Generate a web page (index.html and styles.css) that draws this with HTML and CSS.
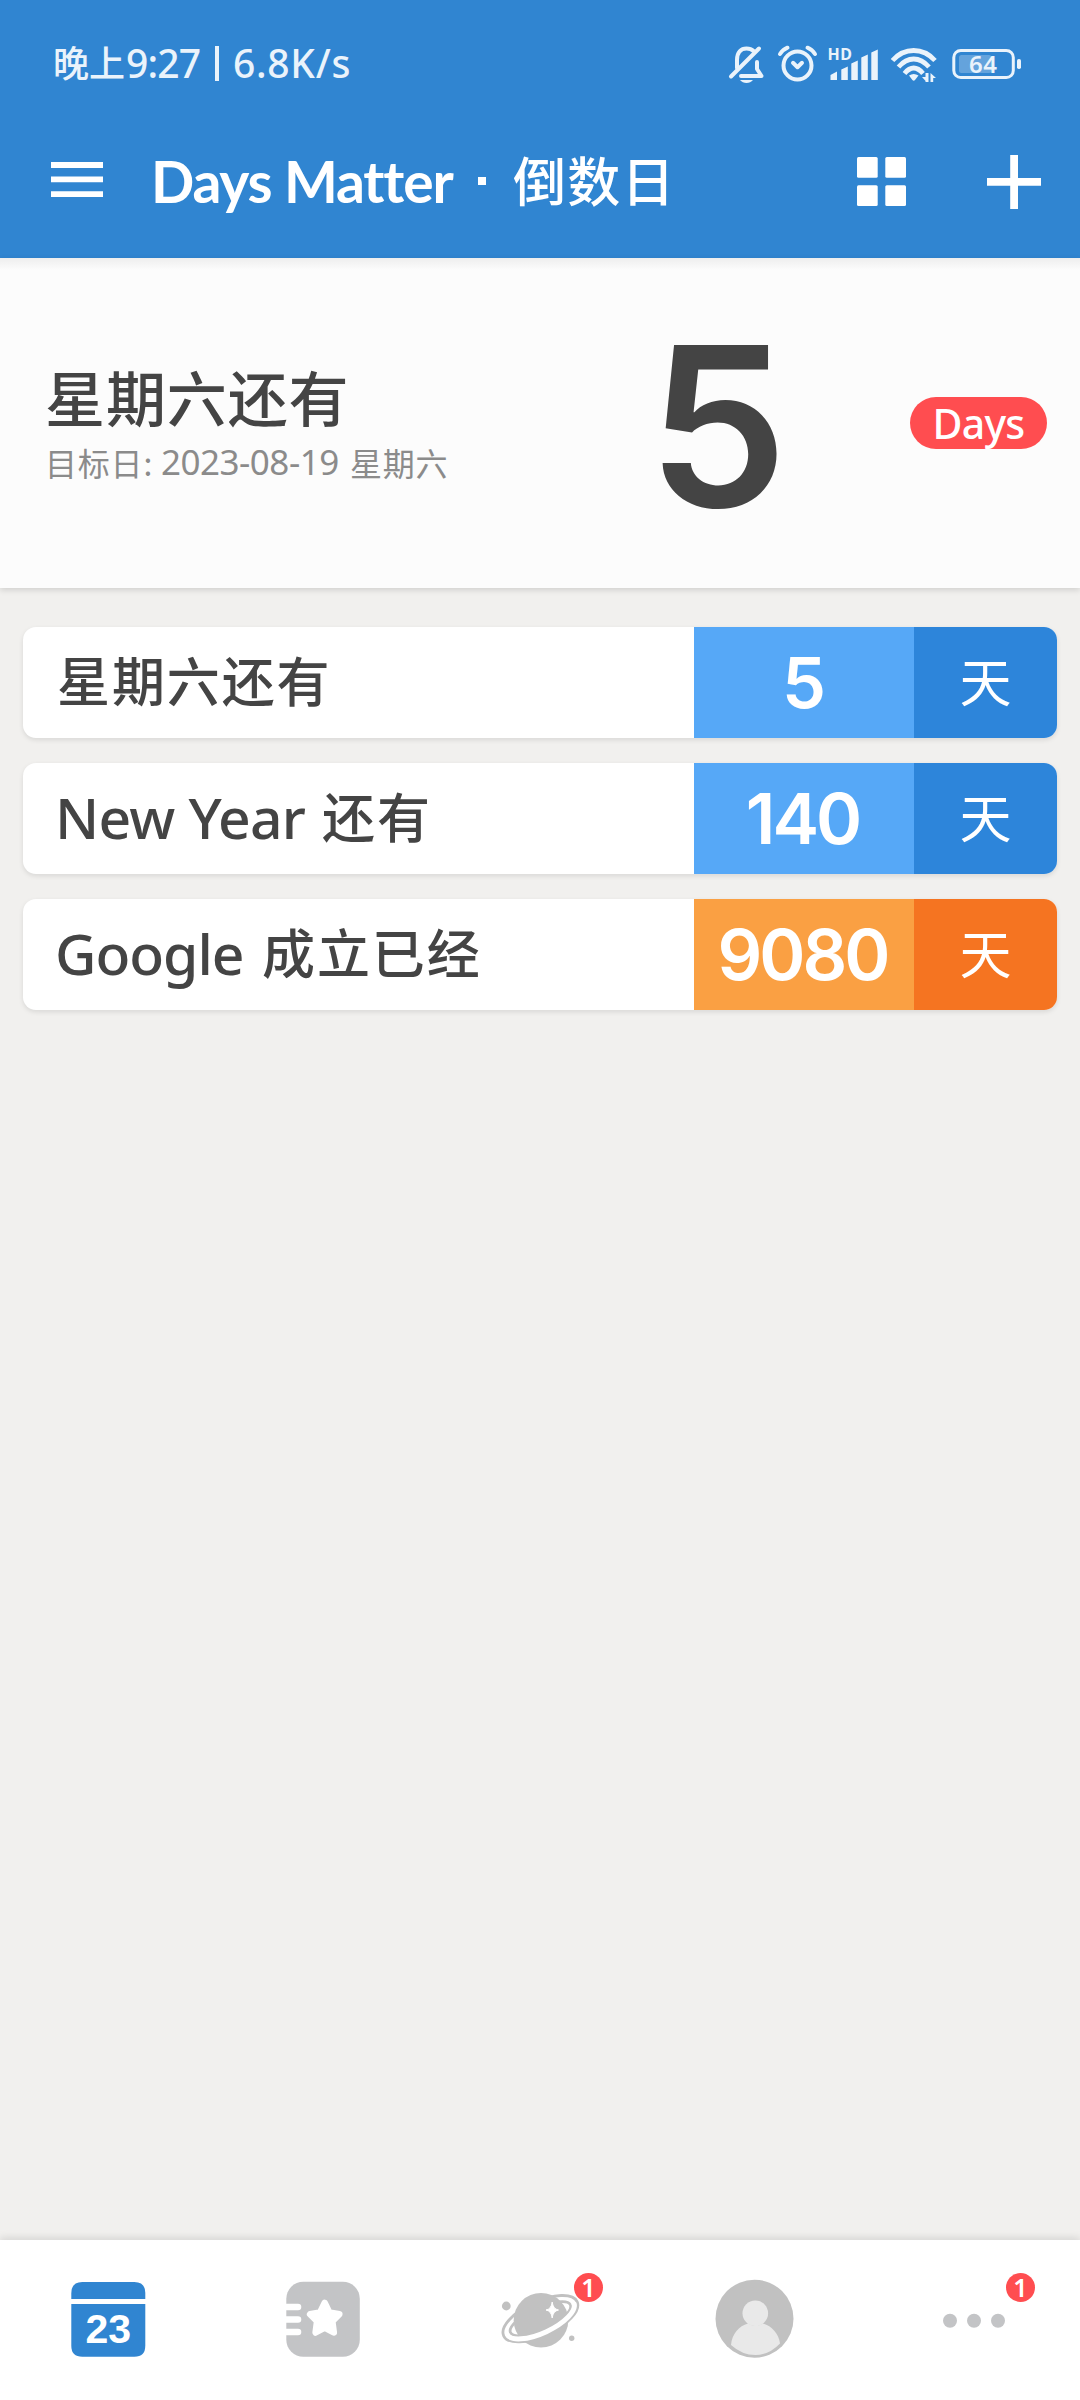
FILE: index.html
```html
<!DOCTYPE html>
<html lang="zh-CN">
<head>
<meta charset="utf-8">
<title>Days Matter · 倒数日</title>
<link rel="stylesheet" href="styles.css">
</head>
<body>
<div class="app">
  <header class="header">
    <div class="status">
      <div class="status-text"><span class="zh">晚上</span><span class="time">9:27</span><span class="bar"></span><span class="speed">6.8K/s</span></div>
      <svg class="status-icons" viewBox="728 40 296 48" width="296" height="48">
        <g fill="none" stroke="#eaf3fb" stroke-width="4" stroke-linecap="round" stroke-linejoin="round">
          <path d="M737 68V60C737 52 741 48.500 746.500 48.500C749.500 48.500 752 49.500 753.500 51"/>
          <path d="M759 48.500L731 76.500"/>
          <path d="M741 76H761.500L757 69V62"/>
          <circle cx="797.500" cy="65.500" r="14"/>
          <path d="M780 54Q783 49.500 787.500 47.700M815 54Q812 49.500 807.500 47.700"/>
          <path d="M793 62.800L797.500 67.200L802 62.800"/>
        </g>
        <g fill="#eaf3fb">
          <path d="M740 80H753Q750.500 83 746.500 83T740 80Z"/>
          <text class="hd" x="827.500" y="60" textLength="24.500">HD</text>
          <path d="M830.500 75L837 71.500V80H830.500ZM841.300 69.500L847.800 66.500V80H841.300ZM851.300 63.500L857.800 60.500V80H851.300ZM861.300 57.500L867.800 54.500V80H861.300ZM871.300 52.500L877.800 49.500V80H871.300Z"/>
          <path d="M909 75.500Q913.700 72.500 918.500 75.500L915 80Q913.700 81.500 912.400 80Z"/>
          <path d="M925.500 73V82H928.500V73ZM922 77L926.500 82V77ZM930.500 73V82H933.200V78H936Z"/>
          <rect x="1017" y="59" width="4" height="10" rx="1.800"/>
        </g>
        <g fill="none" stroke="#eaf3fb" stroke-width="4.800">
          <path d="M892.500 60.500Q901.500 50.500 913.700 50.500T935 60.500"/>
          <path d="M898.500 67Q905.500 59 913.700 59T929 67"/>
          <path d="M904.500 73.500Q909 68 913.700 68T923 73.500"/>
          <rect x="953.800" y="50.500" width="59.500" height="27" rx="7" stroke-width="3"/>
        </g>
        <rect x="959" y="55" width="32.500" height="18" rx="2.500" fill="#fff" fill-opacity=".25"/>
        <text class="level" x="969" y="73" textLength="28">64</text>
      </svg>
    </div>
    <div class="toolbar">
      <svg class="menu" viewBox="0 0 52 36" width="52" height="36" fill="#fff">
        <path d="M0 0H52V6H0ZM0 14.500H52V20.300H0ZM0 29.300H52V35H0Z"/>
      </svg>
      <h1 class="title"><span class="title-en">Days Matter</span><span class="dot"></span><span class="title-zh">倒数日</span></h1>
      <svg class="grid" viewBox="0 0 49 49" width="49" height="49" fill="#fff">
        <rect width="20.700" height="20.700" rx="1.500"/><rect x="28.300" width="20.700" height="20.700" rx="1.500"/>
        <rect y="28.300" width="20.700" height="20.700" rx="1.500"/><rect x="28.300" y="28.300" width="20.700" height="20.700" rx="1.500"/>
      </svg>
      <svg class="add" viewBox="0 0 54 54" width="54" height="54" fill="#fff">
        <path d="M23.200 0H31V23H54V30.800H31V54H23.200V30.800H0V23H23.200Z"/>
      </svg>
    </div>
  </header>

  <section class="hero">
    <div class="hero-info">
      <div class="hero-title">星期六还有</div>
      <div class="hero-date"><span class="date-label">目标日:</span><span class="date">2023-08-19</span><span>星期六</span></div>
    </div>
    <div class="hero-count">5</div>
    <div class="pill">Days</div>
  </section>

  <main class="list">
    <div class="row blue">
      <div class="name"><span class="zh">星期六还有</span></div>
      <div class="count">5</div><div class="unit">天</div>
    </div>
    <div class="row blue">
      <div class="name"><span class="en year">New Year</span><span class="zh">还有</span></div>
      <div class="count">140</div><div class="unit">天</div>
    </div>
    <div class="row orange">
      <div class="name"><span class="en google">Google</span><span class="zh">成立已经</span></div>
      <div class="count">9080</div><div class="unit">天</div>
    </div>
  </main>

  <nav class="nav">
    <div class="tab">
      <svg viewBox="0 2240 216 160" width="216" height="160">
        <path d="M71.300 2299V2293Q71.300 2282 82.300 2282H134.300Q145.300 2282 145.300 2293V2299Z" fill="#3085d1"/>
        <path d="M71.300 2304H145.300V2345.700Q145.300 2356.700 134.300 2356.700H82.300Q71.300 2356.700 71.300 2345.700Z" fill="#3085d1"/>
        <text class="cal" x="108.300" y="2343">23</text>
      </svg>
    </div>
    <div class="tab">
      <svg viewBox="216 2240 216 160" width="216" height="160">
        <rect x="286.300" y="2281.700" width="73.500" height="75" rx="17" fill="#c3c4c6"/>
        <path d="M284 2307H298M284 2319.500H298M284 2332H298" stroke="#fff" stroke-width="6.600" stroke-linecap="round"/>
        <path d="M324.700 2303L329.300 2312.500L339.300 2314.200L332.300 2321.300L333.800 2332.500L324.700 2327.600L315.600 2332.500L317.100 2321.300L310.100 2314.200L320.100 2312.500Z" fill="#fff" stroke="#fff" stroke-width="6.500" stroke-linejoin="round"/>
      </svg>
    </div>
    <div class="tab">
      <svg viewBox="432 2240 216 160" width="216" height="160">
        <g transform="rotate(-25 540.400 2318.700)" fill="none" stroke="#c1c1c1" stroke-width="2.800">
          <ellipse cx="540.400" cy="2318.700" rx="40.500" ry="17.300"/>
          <ellipse cx="540.400" cy="2318.700" rx="33" ry="11"/>
        </g>
        <circle cx="541" cy="2320.300" r="27.300" fill="#c1c1c1"/>
        <path transform="rotate(-25 540.400 2318.700)" d="M503.600 2318.700A36.800 14.300 0 0 0 577.200 2318.700" fill="none" stroke="#fff" stroke-width="5"/>
        <path d="M552.200 2302Q553 2309 558.500 2310Q553 2311 552.200 2318Q551.400 2311 546 2310Q551.400 2309 552.200 2302Z" fill="#fff" stroke="#fff"/>
        <circle cx="506.300" cy="2306" r="4.400" fill="#c1c1c1"/><circle cx="571.700" cy="2338.200" r="2.700" fill="#c1c1c1"/>
      </svg>
      <span class="badge">1</span>
    </div>
    <div class="tab">
      <svg viewBox="648 2240 216 160" width="216" height="160">
        <circle cx="754.500" cy="2318.700" r="39" fill="#c1c1c1"/>
        <circle cx="755.300" cy="2313.300" r="12.800" fill="#e9e9e9"/>
        <path d="M731 2345C732 2334 739 2326 748 2323.500Q755.500 2328 763 2323.500C772 2326 779 2334 780 2343.500Q769 2355 755.500 2355T731 2345Z" fill="#e9e9e9"/>
      </svg>
    </div>
    <div class="tab">
      <svg viewBox="864 2240 216 160" width="216" height="160" fill="#c3c4c6">
        <circle cx="950" cy="2320.700" r="7"/><circle cx="974" cy="2320.700" r="7"/><circle cx="998" cy="2320.700" r="7"/>
      </svg>
      <span class="badge">1</span>
    </div>
  </nav>
</div>
</body>
</html>
```
FILE: styles.css
```css
* { box-sizing: border-box; }
body {
  margin: 0;
  font-family: "Noto Sans", "Noto Sans CJK SC", sans-serif;
  background: #f1f0ee;
}
svg { display: block; }
.app {
  width: 1080px;
  height: 2400px;
  display: flex;
  flex-direction: column;
  overflow: hidden;
}
.header {
  height: 258px;
  background: #3085d1;
  color: #fff;
  flex: none;
}
.status {
  height: 106px;
  padding: 40px 56px 0 53px;
  display: flex;
  justify-content: space-between;
}
.status-text {
  display: flex;
  align-items: center;
  height: 46px;
  line-height: 46px;
  color: #eaf3fb;
  font-size: 39px;
  font-weight: 500;
  white-space: nowrap;
}
.status-text .zh { font: 500 36px/43px "Noto Sans CJK SC", sans-serif; height: 46px; width: 73px; }
.status-text .time { width: 76px; letter-spacing: -.8px; }
.status-text .bar { width: 4px; height: 35px; margin: 0 14px 0 13px; background: #eaf3fb; }
.status-text .speed { letter-spacing: .7px; }
.hd { font-size: 16px; font-weight: 700; }
.level { font-size: 24px; font-weight: 600; fill: #eaf3fb; }

.toolbar {
  height: 152px;
  padding: 0 39px 0 51px;
  display: flex;
  align-items: flex-start;
}
.menu { margin-top: 56px; }
.title {
  margin: 35px 0 0 48px;
  height: 80px;
  display: flex;
  align-items: center;
  line-height: 80px;
  white-space: nowrap;
}
.title-en {
  font-family: Lato, sans-serif;
  font-size: 57px;
  font-weight: 700;
  font-variant-ligatures: none;
  letter-spacing: -1.2px;
  width: 303px;
}
.dot { width: 8px; height: 8px; background: #fff; margin-left: 24px; }
.title-zh { font: 500 53px/77px "Noto Sans CJK SC", sans-serif; height: 80px; margin-left: 27px; letter-spacing: 1.3px; }
.grid { margin: 51px 81px 0 auto; }
.add { margin-top: 49px; }

.hero {
  position: relative;
  height: 330px;
  flex: none;
  display: flex;
  background: linear-gradient(#eee, #fcfcfc 12px);
  box-shadow: 0 2px 6px rgba(0, 0, 0, .14);
  color: #444;
}
.hero-info { width: 600px; padding: 98px 0 0 45px; }
.hero-title { font: 500 60px/80px "Noto Sans CJK SC", sans-serif; letter-spacing: .9px; }
.hero-date {
  display: flex;
  align-items: center;
  margin-top: 4px;
  height: 44px;
  font: 400 32px/44px "Noto Sans CJK SC", sans-serif;
  letter-spacing: .8px;
  color: #8b8b8b;
}
.date-label { width: 116px; }
.date { width: 189px; font: 400 35px/46px "Noto Sans", sans-serif; letter-spacing: -.5px; }
.hero-count {
  width: 235px;
  text-align: center;
  font: 600 223px/337px Inter, sans-serif;
}
.pill {
  margin: 139px 0 0 75px;
  width: 137px;
  height: 52px;
  border-radius: 26px;
  background: #ff4d50;
  color: #fff;
  text-align: center;
  font-size: 41px;
  line-height: 52px;
  font-weight: 500;
  letter-spacing: -.7px;
}

.list {
  flex: 1;
  padding: 39px 23px 0;
  display: flex;
  flex-direction: column;
  gap: 25px;
}
.row {
  height: 111px;
  display: flex;
  background: #fff;
  border-radius: 13px;
  overflow: hidden;
  box-shadow: 0 2px 5px rgba(0, 0, 0, .1);
}
.name { width: 671px; padding-left: 34px; display: flex; color: #444; white-space: nowrap; }
.name .zh { font: 500 53px/105px "Noto Sans CJK SC", sans-serif; letter-spacing: 1.9px; }
.name .en { font-size: 57px; font-weight: 500; line-height: 109px; letter-spacing: -.8px; margin-left: -2px; }
.name .year { width: 267px; }
.name .google { width: 207px; letter-spacing: -1px; }
.count, .unit { color: #fff; text-align: center; }
.count { width: 220px; font: 600 70px/111px Inter, sans-serif; letter-spacing: -3px; text-indent: -3px; }
.unit { width: 143px; font: 400 52px/105px "Noto Sans CJK SC", sans-serif; }
.blue .count { background: #56a8f7; }
.blue .unit { background: #2d85da; }
.orange .count { background: #faa043; }
.orange .unit { background: #f57421; }

.nav {
  height: 160px;
  flex: none;
  display: flex;
  background: #fff;
  box-shadow: 0 -2px 8px rgba(0, 0, 0, .12);
}
.tab { position: relative; width: 216px; }
.cal {
  font: 700 41px "Liberation Sans", sans-serif;
  fill: #fff;
  text-anchor: middle;
}
.badge {
  position: absolute;
  top: 33px;
  left: 142px;
  width: 29px;
  height: 29px;
  border-radius: 50%;
  background: #ff4d50;
  color: #fff;
  font-weight: 600;
  font-size: 25px;
  line-height: 29px;
  text-align: center;
}
```
